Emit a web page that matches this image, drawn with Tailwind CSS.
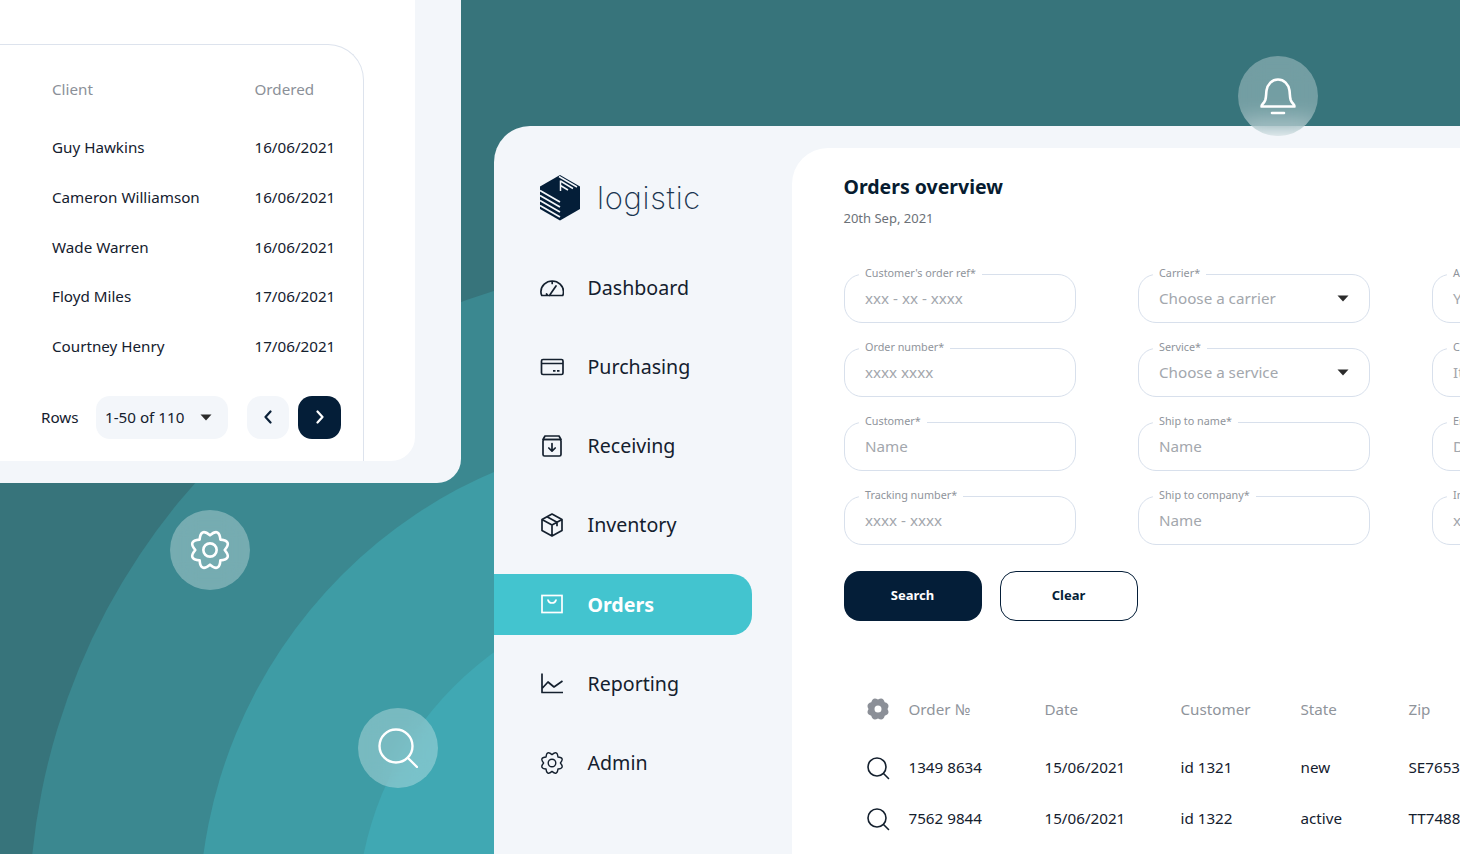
<!DOCTYPE html>
<html lang="en">
<head>
    <meta charset="UTF-8">
    <title>logistic - Orders overview</title>
    <script src="https://cdn.jsdelivr.net/npm/@tailwindcss/browser@4"></script>
</head>
<body class="font-['Noto_Sans',sans-serif] text-[#14202e]">
<div class="relative w-[1460px] h-[854px] overflow-hidden bg-[#37747b]">
    <!-- background arcs -->
    <svg class="absolute inset-0" width="1460" height="854">
        <circle cx="687" cy="920" r="658" fill="#3b8890"/>
        <circle cx="687" cy="920" r="488" fill="#3e9ca5"/>
        <circle cx="687" cy="920" r="330" fill="#40a8b3"/>
    </svg>

    <!-- clients window -->
    <div class="absolute left-0 top-0 w-[461px] h-[483px] bg-[#f3f6fa] rounded-br-[24px]">
        <div class="w-[415px] h-[461px] bg-white rounded-br-[24px] pt-[44px]">
            <div class="w-[364px] h-[417px] border-t-[1.5px] border-r-[1.5px] border-[#dde3ed] rounded-tr-[36px] pl-[41px] pt-[32.5px] text-[15.2px]">
                <div class="ml-[11px] grid grid-cols-[202.5px_1fr] auto-rows-[24px] gap-y-[25.7px]">
                    <div class="text-[#8b9098] mb-[9px]">Client</div><div class="text-[#8b9098] mb-[9px]">Ordered</div>
                    <div class="mt-[9px]">Guy Hawkins</div><div class="mt-[9px]">16/06/2021</div>
                    <div class="mt-[9px]">Cameron Williamson</div><div class="mt-[9px]">16/06/2021</div>
                    <div class="mt-[9px]">Wade Warren</div><div class="mt-[9px]">16/06/2021</div>
                    <div class="mt-[9px]">Floyd Miles</div><div class="mt-[9px]">17/06/2021</div>
                    <div class="mt-[9px]">Courtney Henry</div><div class="mt-[9px]">17/06/2021</div>
                </div>
                <div class="flex items-center mt-[46px]">
                    <span class="w-[55px]">Rows</span>
                    <div class="w-[132px] h-[43px] bg-[#f3f6fa] rounded-[14px] flex items-center pl-[9px]">
                        <span>1-50 of 110</span>
                        <svg class="ml-[16px]" width="12" height="7" viewBox="0 0 12 7"><path d="M0.5 0.5h11L6 6.5z" fill="#2b2b2b"/></svg>
                    </div>
                    <div class="ml-[19px] w-[42px] h-[43px] bg-[#f3f6fa] rounded-[14px] flex items-center justify-center">
                        <svg width="10" height="14" viewBox="0 0 10 14" fill="none" stroke="#0a2038" stroke-width="2.2" stroke-linecap="round" stroke-linejoin="round"><path d="M7.5 1.5 2.5 7l5 5.5"/></svg>
                    </div>
                    <div class="ml-[9px] w-[43px] h-[43px] bg-[#041e38] rounded-[14px] flex items-center justify-center">
                        <svg width="10" height="14" viewBox="0 0 10 14" fill="none" stroke="#fff" stroke-width="2.2" stroke-linecap="round" stroke-linejoin="round"><path d="M2.5 1.5 7.5 7l-5 5.5"/></svg>
                    </div>
                </div>
            </div>
        </div>
    </div>

    <!-- main window -->
    <div class="absolute left-[494px] top-[126px] right-[-300px] h-[800px] bg-[#f3f6fa] rounded-tl-[36px] flex">
        <aside class="w-[298px] shrink-0">
            <div class="mt-[49px] h-[46px] pl-[46px] flex items-center gap-[17px]">
                <svg width="40" height="46" viewBox="0 0 40 46">
                    <path d="M20 0 40 11.5V34L20 45.5 0 34V11.5z" fill="#041e38"/>
                    <path d="M0 15.5 20 27M0 20.5 20 32M0 25.5 20 37M0 30.5 20 42" stroke="#f3f6fa" stroke-width="1.8" fill="none"/>
                    <path d="M19 1.5 37 12M20.5 6 33 13.5M20.5 10.5 28 15M20.5 5.5V16" stroke="#f3f6fa" stroke-width="1.5" fill="none"/>
                </svg>
                <span class="-mt-[2px] font-['Inter',sans-serif] font-extralight text-[31px] leading-none text-[#1a3550] tracking-[0.7px]">logistic</span>
            </div>
            <nav class="mt-[36px] flex flex-col gap-[18.2px] text-[19.6px]">
                <a class="h-[61px] pl-[46px] flex items-center gap-[23.5px]">
                    <svg width="24" height="24" viewBox="0 0 24 24" fill="none" stroke="#14202e" stroke-width="1.7" stroke-linecap="round" stroke-linejoin="round"><path d="M1.8 19.5h20.9c.6-1 .8-2.5.8-3.800C23.500 9.800 18.300 5 12.200 5S.9 9.800.9 15.700c0 1.300.3 2.800.9 3.800zM16 10l-4.500 6.500-2 3M12.200 5v2.500M7.500 19.500c-.2-.6-.5-1.100-1-1.500"/></svg>
                    <span>Dashboard</span>
                </a>
                <a class="h-[61px] pl-[46px] flex items-center gap-[23.5px]">
                    <svg width="24" height="24" viewBox="0 0 24 24" fill="none" stroke="#14202e" stroke-width="1.7"><rect x="1.5" y="4.5" width="21.5" height="15" rx="1.5"/><path d="M1.5 8.500h21.500M13 15.800h2.500M17 15.800h2.500"/></svg>
                    <span>Purchasing</span>
                </a>
                <a class="h-[61px] pl-[46px] flex items-center gap-[23.5px]">
                    <svg width="24" height="24" viewBox="0 0 24 24" fill="none" stroke="#14202e" stroke-width="1.7" stroke-linecap="round" stroke-linejoin="round"><rect x="3" y="5.5" width="18" height="16.5" rx="1.5"/><path d="M5 2h14l2 3.500H3zM12 9.500v7.500M8.800 14l3.200 3.200 3.200-3.200"/></svg>
                    <span>Receiving</span>
                </a>
                <a class="h-[61px] pl-[46px] flex items-center gap-[23.5px]">
                    <svg width="24" height="24" viewBox="0 0 24 24" fill="none" stroke="#14202e" stroke-width="1.7" stroke-linejoin="round"><path d="M12 1 22 6.500v11L12 23 2 17.500v-11zM2 6.500 12 12l10-5.500M12 12v11M7 3.800l10 5.500v4"/></svg>
                    <span>Inventory</span>
                </a>
                <a class="h-[61px] w-[258px] pl-[46px] flex items-center gap-[23.5px] bg-[#43c4cf] rounded-r-[20px] text-white font-bold">
                    <svg width="24" height="24" viewBox="0 0 24 24" fill="none" stroke="#fff" stroke-width="1.7" stroke-linecap="round"><rect x="2" y="3.5" width="20" height="17"/><path d="M8 8c.5 2.200 2 3 4 3s3.500-.8 4-3"/></svg>
                    <span>Orders</span>
                </a>
                <a class="h-[61px] pl-[46px] flex items-center gap-[23.5px]">
                    <svg width="24" height="24" viewBox="0 0 24 24" fill="none" stroke="#14202e" stroke-width="1.7" stroke-linejoin="round"><path d="M2 2.500V21.500H23M2 17.500l6-6.500 6 5 8.500-6"/></svg>
                    <span>Reporting</span>
                </a>
                <a class="h-[61px] pl-[46px] flex items-center gap-[23.5px]">
                    <svg width="24" height="24" viewBox="0 0 24 24" fill="none" stroke="#14202e" stroke-width="1.4" stroke-linejoin="round"><path d="M12 3.600Q17.360 -.93 17.940 6.060 24.930 6.640 20.400 12 24.930 17.360 17.940 17.940 17.360 24.930 12 20.400 6.640 24.930 6.060 17.940 -.93 17.360 3.600 12 -.93 6.640 6.060 6.060 6.640 -.93 12 3.600z"/><circle cx="12" cy="12" r="3.800"/></svg>
                    <span>Admin</span>
                </a>
            </nav>
        </aside>

        <main class="flex-1 mt-[22px] bg-white rounded-tl-[36px] pl-[51.5px] pt-[25px]">
            <h1 class="text-[19.5px] leading-[28px] font-bold text-[#071c30]">Orders overview</h1>
            <p class="mt-[7px] text-[13px] leading-[20px] text-[#6c7178]">20th Sep, 2021</p>

            <div class="mt-[45.5px] grid grid-cols-[232px_232px_232px] gap-x-[62px] gap-y-[24.5px] text-[#a3a7ad] text-[15.2px]">
                <div class="relative h-[49.5px] border-[1.5px] border-[#d8e0ec] rounded-[18px] pl-[20.5px] flex items-center"><label class="absolute -top-[9.5px] left-[14.5px] bg-white px-[6px] text-[10.8px] leading-[16px] text-[#8f949b]">Customer's order ref*</label>xxx - xx - xxxx</div>
                <div class="relative h-[49.5px] border-[1.5px] border-[#d8e0ec] rounded-[18px] pl-[20.5px] pr-[20px] flex items-center justify-between"><label class="absolute -top-[9.5px] left-[14.5px] bg-white px-[6px] text-[10.8px] leading-[16px] text-[#8f949b]">Carrier*</label>Choose a carrier<svg width="12" height="7" viewBox="0 0 12 7"><path d="M.5.500h11L6 6.500z" fill="#2b2b2b"/></svg></div>
                <div class="relative h-[49.5px] border-[1.5px] border-[#d8e0ec] rounded-[18px] pl-[20.5px] flex items-center"><label class="absolute -top-[9.5px] left-[14.5px] bg-white px-[6px] text-[10.8px] leading-[16px] text-[#8f949b]">Account*</label>Your account</div>

                <div class="relative h-[49.5px] border-[1.5px] border-[#d8e0ec] rounded-[18px] pl-[20.5px] flex items-center"><label class="absolute -top-[9.5px] left-[14.5px] bg-white px-[6px] text-[10.8px] leading-[16px] text-[#8f949b]">Order number*</label>xxxx xxxx</div>
                <div class="relative h-[49.5px] border-[1.5px] border-[#d8e0ec] rounded-[18px] pl-[20.5px] pr-[20px] flex items-center justify-between"><label class="absolute -top-[9.5px] left-[14.5px] bg-white px-[6px] text-[10.8px] leading-[16px] text-[#8f949b]">Service*</label>Choose a service<svg width="12" height="7" viewBox="0 0 12 7"><path d="M.5.500h11L6 6.500z" fill="#2b2b2b"/></svg></div>
                <div class="relative h-[49.5px] border-[1.5px] border-[#d8e0ec] rounded-[18px] pl-[20.5px] flex items-center"><label class="absolute -top-[9.5px] left-[14.5px] bg-white px-[6px] text-[10.8px] leading-[16px] text-[#8f949b]">Contact*</label>Its name</div>

                <div class="relative h-[49.5px] border-[1.5px] border-[#d8e0ec] rounded-[18px] pl-[20.5px] flex items-center"><label class="absolute -top-[9.5px] left-[14.5px] bg-white px-[6px] text-[10.8px] leading-[16px] text-[#8f949b]">Customer*</label>Name</div>
                <div class="relative h-[49.5px] border-[1.5px] border-[#d8e0ec] rounded-[18px] pl-[20.5px] flex items-center"><label class="absolute -top-[9.5px] left-[14.5px] bg-white px-[6px] text-[10.8px] leading-[16px] text-[#8f949b]">Ship to name*</label>Name</div>
                <div class="relative h-[49.5px] border-[1.5px] border-[#d8e0ec] rounded-[18px] pl-[20.5px] flex items-center"><label class="absolute -top-[9.5px] left-[14.5px] bg-white px-[6px] text-[10.8px] leading-[16px] text-[#8f949b]">Email*</label>Domain</div>

                <div class="relative h-[49.5px] border-[1.5px] border-[#d8e0ec] rounded-[18px] pl-[20.5px] flex items-center"><label class="absolute -top-[9.5px] left-[14.5px] bg-white px-[6px] text-[10.8px] leading-[16px] text-[#8f949b]">Tracking number*</label>xxxx - xxxx</div>
                <div class="relative h-[49.5px] border-[1.5px] border-[#d8e0ec] rounded-[18px] pl-[20.5px] flex items-center"><label class="absolute -top-[9.5px] left-[14.5px] bg-white px-[6px] text-[10.8px] leading-[16px] text-[#8f949b]">Ship to company*</label>Name</div>
                <div class="relative h-[49.5px] border-[1.5px] border-[#d8e0ec] rounded-[18px] pl-[20.5px] flex items-center"><label class="absolute -top-[9.5px] left-[14.5px] bg-white px-[6px] text-[10.8px] leading-[16px] text-[#8f949b]">Invoice*</label>xxxx</div>
            </div>

            <div class="mt-[26px] flex gap-[18px] text-[13px] font-bold">
                <button class="w-[138px] h-[50px] rounded-[16px] bg-[#041e38] text-white">Search</button>
                <button class="w-[138px] h-[50px] rounded-[16px] border border-[#041e38] text-[#041e38]">Clear</button>
            </div>

            <div class="mt-[76px] pl-[23px] text-[15.2px] leading-[24px]">
                <div class="grid grid-cols-[42px_136px_136px_120px_108px_100px] items-center text-[#8f949b]">
                    <svg class="-ml-[1px]" width="24" height="24" viewBox="0 0 24 24"><path fill-rule="evenodd" d="M12 2.500Q17.170 -.47 18.720 5.280 24.470 6.830 21.500 12 24.470 17.170 18.720 18.720 17.170 24.470 12 21.500 6.830 24.470 5.280 18.720 -.47 17.170 2.500 12 -.47 6.830 5.280 5.280 6.830 -.47 12 2.500zM12 8.500a3.500 3.500 0 1 0 0 7 3.500 3.500 0 0 0 0-7z" fill="#8b8f97"/></svg>
                    <span>Order №</span><span>Date</span><span>Customer</span><span>State</span><span>Zip</span>
                </div>
                <div class="mt-[33.5px] grid grid-cols-[42px_136px_136px_120px_108px_100px] items-center">
                    <svg class="-ml-[1px] mt-[1px]" width="24" height="24" viewBox="0 0 24 24" fill="none" stroke="#14202e" stroke-width="1.6" stroke-linecap="round"><circle cx="11" cy="11" r="9"/><path d="m17.500 17.500 5 5"/></svg>
                    <span>1349 8634</span><span>15/06/2021</span><span>id 1321</span><span>new</span><span>SE7653</span>
                </div>
                <div class="mt-[26px] grid grid-cols-[42px_136px_136px_120px_108px_100px] items-center">
                    <svg class="-ml-[1px] mt-[1px]" width="24" height="24" viewBox="0 0 24 24" fill="none" stroke="#14202e" stroke-width="1.6" stroke-linecap="round"><circle cx="11" cy="11" r="9"/><path d="m17.500 17.500 5 5"/></svg>
                    <span>7562 9844</span><span>15/06/2021</span><span>id 1322</span><span>active</span><span>TT7488</span>
                </div>
            </div>
        </main>
    </div>

    <!-- floating round buttons -->
    <div class="absolute left-[1238px] top-[56px] w-[80px] h-[80px] rounded-full bg-white/30 backdrop-blur-md flex items-center justify-center">
        <svg width="40" height="40" viewBox="0 0 40 40" fill="none" stroke="#fff" stroke-width="2.6" stroke-linecap="round" stroke-linejoin="round"><path d="M3.500 30.500h33c.5-1.500-2.500-3-3.800-6.500-1-3-.7-6-1.200-9.500C30.500 8 26 3.500 20 3.500S9.500 8 8.500 14.500c-.5 3.500-.2 6.500-1.200 9.500-1.300 3.500-4.300 5-3.800 6.500zM14 37h12"/></svg>
    </div>
    <div class="absolute left-[170px] top-[510px] w-[80px] h-[80px] rounded-full bg-white/30 backdrop-blur-md flex items-center justify-center">
        <svg width="42" height="42" viewBox="0 0 24 24" fill="none" stroke="#fff" stroke-width="1.5" stroke-linejoin="round"><path d="M12 3.600Q17.360 -.93 17.940 6.060 24.930 6.640 20.400 12 24.930 17.360 17.940 17.940 17.360 24.930 12 20.400 6.640 24.930 6.060 17.940 -.93 17.360 3.600 12 -.93 6.640 6.060 6.060 6.640 -.93 12 3.600z"/><circle cx="12" cy="12" r="3.800"/></svg>
    </div>
    <div class="absolute left-[358px] top-[708px] w-[80px] h-[80px] rounded-full bg-white/30 backdrop-blur-md flex items-center justify-center">
        <svg width="40" height="40" viewBox="0 0 40 40" fill="none" stroke="#fff" stroke-width="2.4" stroke-linecap="round"><circle cx="18" cy="18" r="16.500"/><path d="m30 30 9 9"/></svg>
    </div>
</div>
</body>
</html>
